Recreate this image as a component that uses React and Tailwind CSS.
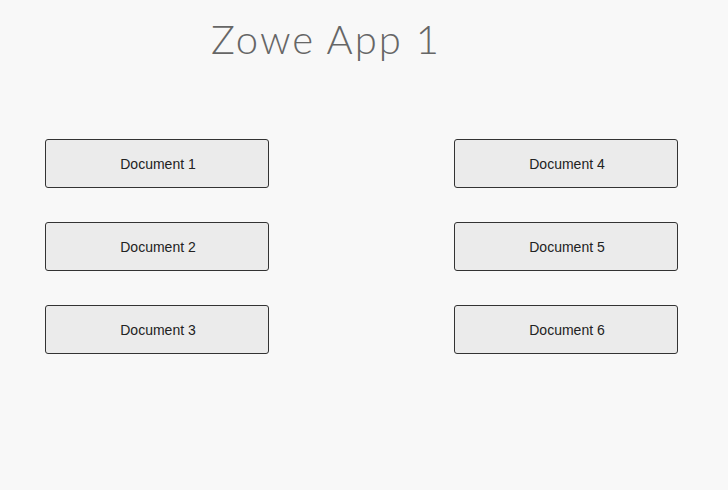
export default function App() {
  const left = ["Document 1", "Document 2", "Document 3"];
  const right = ["Document 4", "Document 5", "Document 6"];
  const Btn = ({ label }) => (
    <button className="w-[224px] h-[49px] pt-[2px] pl-[2px] bg-[#ebebeb] border border-[#333] rounded-[3px] text-[14px] text-[#222] font-['Liberation_Sans',Arial,sans-serif]">
      {label}
    </button>
  );
  return (
    <div className="w-[728px] h-[490px] bg-[#f8f8f8] overflow-hidden">
      <h1 className="pl-[211px] pt-[15px] text-[40px] leading-[48px] font-light text-[#666] font-['Lato',sans-serif] tracking-[2px]">
        Zowe App 1
      </h1>
      <div className="mt-[76px] flex justify-between pl-[45px] pr-[50px]">
        <div className="flex flex-col gap-[34px]">
          {left.map((l) => (
            <Btn key={l} label={l} />
          ))}
        </div>
        <div className="flex flex-col gap-[34px]">
          {right.map((l) => (
            <Btn key={l} label={l} />
          ))}
        </div>
      </div>
    </div>
  );
}
